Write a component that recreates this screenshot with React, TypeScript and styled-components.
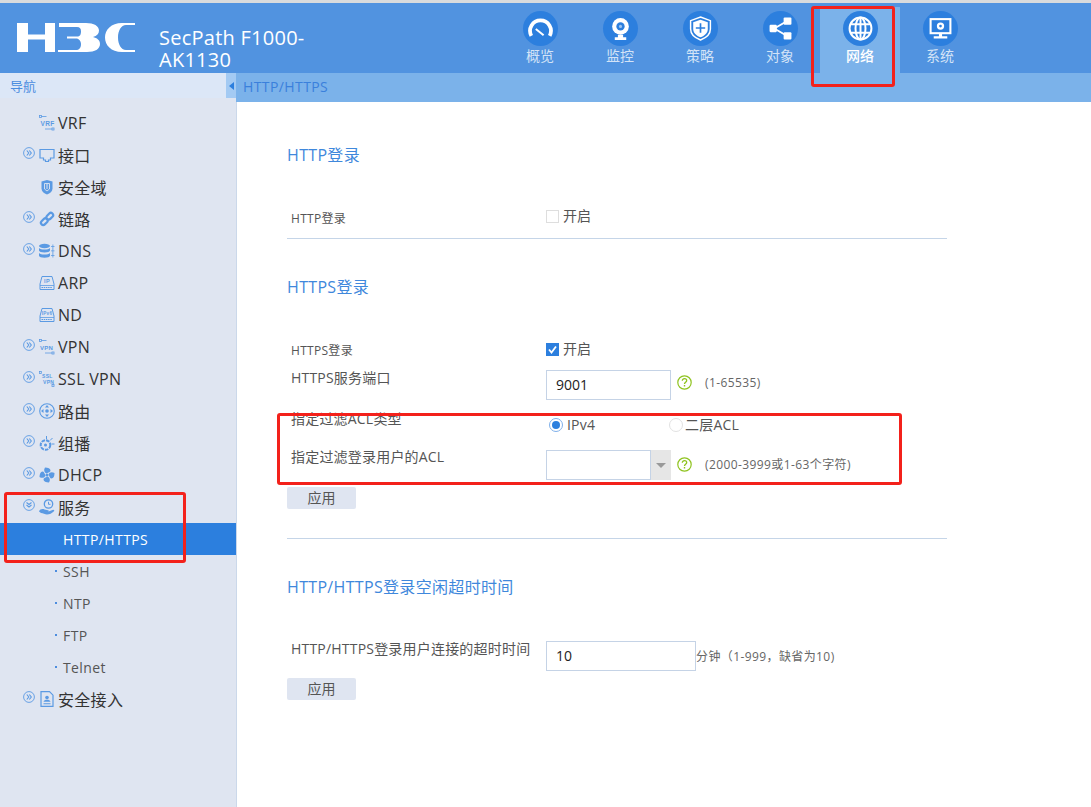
import React from "react";
import styled, { createGlobalStyle } from "styled-components";

const FONT = `"Open Sans", "Noto Sans CJK SC", sans-serif`;

const Global = createGlobalStyle`
  html, body { margin: 0; padding: 0; background: #fff; }
  * { box-sizing: border-box; }
  body { font-family: ${FONT}; }
`;

const Page = styled.div`
  position: relative;
  width: 1091px;
  height: 807px;
  overflow: hidden;
  border-top: 3px solid #d9dbdd;
  display: flex;
  flex-direction: column;
`;

const Header = styled.header`
  height: 70px;
  flex: none;
  background: #5193e0;
  display: flex;
`;

const Brand = styled.div`
  width: 500px;
  flex: none;
  display: flex;
  padding: 20px 0 0 17px;
`;

const LogoMark = styled.svg`
  width: 118px;
  height: 29px;
  flex: none;
  fill: #fff;
`;

const ProductName = styled.div`
  margin: 4px 0 0 24px;
  width: 170px;
  color: #fff;
  font-size: 20px;
  letter-spacing: 0.25px;
  line-height: 22px;
`;

const Tabs = styled.nav`
  display: flex;
`;

const Tab = styled.div<{ $active?: boolean }>`
  width: 80px;
  margin-top: 4px;
  padding-top: 4px;
  display: flex;
  flex-direction: column;
  align-items: center;
  background: ${(p) => (p.$active ? "#7bb2ea" : "transparent")};
  color: ${(p) => (p.$active ? "#fff" : "#d3e3f7")};
  font-size: 14px;
  line-height: 18px;
  font-weight: ${(p) => (p.$active ? 500 : 400)};
`;

const TabBadge = styled.div`
  width: 35px;
  height: 35px;
  border-radius: 50%;
  background: #2c7fde;
  display: flex;
  align-items: center;
  justify-content: center;
  margin-bottom: 1px;
  svg { width: 25px; height: 25px; display: block; }
`;

const Shell = styled.div`
  flex: 1;
  display: flex;
  min-height: 0;
`;

const Sidebar = styled.aside`
  width: 237px;
  flex: none;
  background: #dfe5f1;
  border-right: 1px solid #cbd8ea;
  display: flex;
  flex-direction: column;
`;

const SideHead = styled.div`
  height: 25px;
  flex: none;
  display: flex;
  background: #dce7f7;
`;

const SideTitle = styled.div`
  flex: 1;
  padding-left: 10px;
  font-size: 13px;
  line-height: 27px;
  color: #4c8ddf;
`;

const Collapse = styled.div`
  width: 10px;
  background: #a3caf3;
  display: flex;
  align-items: center;
  justify-content: center;
  &::before {
    content: "";
    border-style: solid;
    border-width: 4px 5px 4px 0;
    border-color: transparent #2c7fde transparent transparent;
  }
`;

const NavList = styled.div`
  padding-top: 9px;
`;

const NavRow = styled.div`
  height: 32px;
  display: flex;
  align-items: center;
  padding-left: 23px;
  color: #333;
  font-size: 16px;
  letter-spacing: 0.3px;
`;

const Expander = styled.svg<{ $hidden?: boolean }>`
  width: 12px;
  height: 12px;
  flex: none;
  margin: -4px 4px 0 0;
  visibility: ${(p) => (p.$hidden ? "hidden" : "visible")};
`;

const NavIcon = styled.svg`
  width: 16px;
  height: 16px;
  flex: none;
  margin: 0 3px 0 0;
`;

const SubRow = styled.div<{ $active?: boolean }>`
  height: 32px;
  display: flex;
  align-items: center;
  padding-left: ${(p) => (p.$active ? "63px" : "55px")};
  font-size: 14px;
  letter-spacing: 0.4px;
  font-weight: ${(p) => (p.$active ? 500 : 400)};
  color: ${(p) => (p.$active ? "#fff" : "#555")};
  background: ${(p) => (p.$active ? "#2c7fde" : "transparent")};
`;

const SubDot = styled.span`
  width: 2px;
  height: 2px;
  margin-right: 6px;
  background: #4c8ddf;
`;

const MainColumn = styled.main`
  flex: 1;
  min-width: 0;
  display: flex;
  flex-direction: column;
`;

const Crumb = styled.div`
  height: 29px;
  flex: none;
  margin-left: -1px;
  padding-left: 7px;
  background: #7bb2ea;
  color: #3a80dc;
  font-size: 14px;
  letter-spacing: 0.4px;
  line-height: 28px;
`;

const Content = styled.div`
  padding: 41px 0 0 50px;
  width: 710px;
`;

const Heading = styled.h2<{ $top?: number }>`
  margin: ${(p) => p.$top ?? 0}px 0 0;
  font-size: 16px;
  font-weight: 400;
  letter-spacing: 0.33px;
  line-height: 24px;
  color: #3f88dc;
`;

const Divider = styled.hr<{ $top: number }>`
  margin: ${(p) => p.$top}px 0 0;
  border: 0;
  height: 1px;
  width: 660px;
  background: #c5d5e8;
`;

const FormRow = styled.div<{ $top?: number; $height: number }>`
  margin-top: ${(p) => p.$top ?? 0}px;
  height: ${(p) => p.$height}px;
  display: grid;
  grid-template-columns: 259px 1fr;
  align-items: start;
`;

const Label = styled.div<{ $line: number; $small?: boolean }>`
  padding-left: 4px;
  font-size: ${(p) => (p.$small ? 12 : 14)}px;
  letter-spacing: ${(p) => (p.$small ? 0.3 : 0.2)}px;
  line-height: ${(p) => p.$line}px;
  color: #555;
  white-space: nowrap;
`;

const Control = styled.div<{ $pad?: number }>`
  padding-top: ${(p) => p.$pad ?? 0}px;
  display: flex;
  align-items: center;
`;

const CheckText = styled.label`
  display: flex;
  align-items: center;
  font-size: 14px;
  line-height: 22px;
  color: #555;
`;

const CheckBox = styled.span<{ $on?: boolean }>`
  width: 13px;
  height: 13px;
  margin-right: 4px;
  display: flex;
  align-items: center;
  justify-content: center;
  background: ${(p) => (p.$on ? "#2c7fde" : "#fff")};
  border: ${(p) => (p.$on ? "none" : "1px solid #dedede")};
  svg { width: 11px; height: 11px; }
`;

const TextInput = styled.input<{ $w: number }>`
  width: ${(p) => p.$w}px;
  height: 30px;
  border: 1px solid #c5d3e6;
  outline: none;
  padding: 0 0 2px 9px;
  font-family: ${FONT};
  font-size: 14px;
  color: #222;
  background: #fff;
`;

const SelectArrow = styled.div`
  width: 20px;
  height: 30px;
  background: #e6e6e6;
  display: flex;
  align-items: center;
  justify-content: center;
  &::before {
    content: "";
    border-style: solid;
    border-width: 5px 5px 0;
    border-color: #999 transparent transparent;
  }
`;

const Assist = styled.div<{ $lift?: number }>`
  display: flex;
  align-items: center;
  padding-bottom: ${(p) => p.$lift ?? 0}px;
`;

const HelpIcon = styled.svg`
  width: 15px;
  height: 15px;
  flex: none;
  margin: 0 13px 0 6px;
`;

const Hint = styled.span`
  font-size: 12px;
  letter-spacing: 0.4px;
  color: #666;
  white-space: nowrap;
`;

const RadioGroup = styled.div`
  display: flex;
  align-items: center;
  padding-left: 3px;
`;

const RadioItem = styled.label<{ $w: number }>`
  width: ${(p) => p.$w}px;
  display: flex;
  align-items: center;
  font-size: 14px;
  letter-spacing: 0.2px;
  line-height: 20px;
  color: #555;
`;

const Radio = styled.span<{ $on?: boolean }>`
  width: 14px;
  height: 14px;
  border-radius: 50%;
  margin-right: ${(p) => (p.$on ? 4 : 2)}px;
  border: 1px solid ${(p) => (p.$on ? "#7fb0ea" : "#e2e2e2")};
  display: flex;
  align-items: center;
  justify-content: center;
  &::before {
    content: "";
    width: 8px;
    height: 8px;
    border-radius: 50%;
    background: ${(p) => (p.$on ? "#2c7fde" : "transparent")};
  }
`;

const ApplyButton = styled.button<{ $top: number }>`
  display: block;
  margin-top: ${(p) => p.$top}px;
  width: 69px;
  height: 22px;
  border: 0;
  border-radius: 2px;
  padding: 0 0 2px;
  background: #dfe5f1;
  color: #555;
  font-family: ${FONT};
  font-size: 14px;
`;

const Callout = styled.div<{ $x: number; $y: number; $w: number; $h: number }>`
  position: absolute;
  left: ${(p) => p.$x}px;
  top: ${(p) => p.$y}px;
  width: ${(p) => p.$w}px;
  height: ${(p) => p.$h}px;
  border: 3px solid #f3211b;
  border-radius: 3px;
  pointer-events: none;
`;

const B = "#5b9ae3";

const tabIcons: Record<string, React.ReactNode> = {
  gauge: (
    <g fill="none" stroke="#fff">
      <path d="M3.2 19a10 10 0 1 1 17.600 0" strokeWidth="3.600" />
      <path d="M5.500 12.500l1 .6M8 8.500l.7.9M12 7v1.200M16 8.500l-.7.9M18.500 12.500l-1 .6" strokeWidth="1.100" stroke="#2c7fde" />
      <path d="M7.500 12.500l7.500 6" strokeWidth="2" />
    </g>
  ),
  cam: (
    <g>
      <circle cx="12" cy="10" r="8" fill="#fff" />
      <circle cx="12" cy="10" r="4" fill="#2c7fde" />
      <circle cx="12" cy="10" r="1.500" fill="#9cc4f1" />
      <path d="M9.500 18h5v2.500h3V23h-11v-2.500h3z" fill="#fff" />
    </g>
  ),
  shield: (
    <g fill="none" stroke="#fff">
      <path d="M12 1l9.500 3.500v8c0 5-4 8.500-9.500 10.500C6.500 21 2.500 17.500 2.500 12.500v-8z" strokeWidth="1.400" />
      <path d="M12 3.500l7 2.500v6.500c0 3.800-3 6.500-7 8-4-1.500-7-4.200-7-8V6z" fill="#fff" stroke="none" />
      <path d="M7.500 11.500h9M12 7v9" stroke="#2c7fde" strokeWidth="1.600" />
    </g>
  ),
  share: (
    <g fill="#fff">
      <path d="M6 12L18 5M6 12l12 7" stroke="#fff" strokeWidth="1.800" />
      <rect x="1.500" y="8.500" width="7" height="7" rx="1" />
      <rect x="15" y="1.500" width="7.500" height="7" rx="1" />
      <rect x="15" y="15.500" width="7.500" height="7" rx="1" />
    </g>
  ),
  globe: (
    <g fill="none" stroke="#fff" strokeWidth="1.900">
      <circle cx="12" cy="12" r="10.500" />
      <ellipse cx="12" cy="12" rx="4.800" ry="10.500" />
      <path d="M12 1.500v21M2.500 8h19M2.500 16h19" />
    </g>
  ),
  monitor: (
    <g>
      <rect x="1.500" y="2" width="21" height="15.500" fill="#fff" />
      <rect x="3.500" y="4" width="17" height="11.500" fill="#2c7fde" />
      <circle cx="12" cy="9.700" r="3.500" fill="#fff" />
      <circle cx="12" cy="9.700" r="1.300" fill="#2c7fde" />
      <path d="M10.500 17h3v2.500h5V21.500h-13v-2h5z" fill="#fff" />
    </g>
  ),
};

const navIcons: Record<string, React.ReactNode> = {
  vrf: (
    <g fill="none" stroke={B} strokeWidth="0.800">
      <rect x="0.500" y="0.500" width="2" height="2" />
      <rect x="13" y="13" width="2" height="2" />
      <path d="M2.500 1.500h5M13 14H6" />
      <text x="1.500" y="10.500" fontSize="6.500" fontWeight="700" fill={B} stroke="none" fontFamily="Liberation Sans">VRF</text>
    </g>
  ),
  port: <path d="M1 2.500h14v8.500h-3.500v2h-2v1.500h-3V13h-2v-2H1z" fill="none" stroke={B} strokeWidth="1.200" />,
  zone: (
    <g>
      <path d="M8 1l5.500 1.500v7c0 3-2.500 5-5.500 6-3-1-5.500-3-5.500-6v-7z" fill={B} />
      <path d="M5.500 4.500h5v5.500l-2.500 2-2.500-2z" fill="none" stroke="#dfe5f1" strokeWidth="0.900" />
      <path d="M8 5v5" stroke="#dfe5f1" strokeWidth="1" />
    </g>
  ),
  link: (
    <g fill="none" stroke={B} strokeWidth="2.200">
      <rect x="1.500" y="8.500" width="7.500" height="4.500" rx="2.200" transform="rotate(-45 5.200 10.700)" />
      <rect x="7" y="3" width="7.500" height="4.500" rx="2.200" transform="rotate(-45 10.700 5.200)" />
    </g>
  ),
  dns: (
    <g fill={B}>
      <ellipse cx="5.500" cy="3" rx="5.500" ry="2.200" />
      <path d="M0 5v2.500c0 1.200 2.500 2 5.500 2s5.500-.8 5.500-2V5c-1 1-3 1.500-5.500 1.500S1 6 0 5z" />
      <path d="M0 10v2.800c0 1.200 2.500 2 5.500 2s5.500-.8 5.500-2V10c-1 1-3 1.500-5.500 1.500S1 11 0 10z" />
      <path d="M13.500 1.500h.8v13h-.8zM12 3h3.500v.8H12zM12 7.500h3.500v.8H12zM12 12h3.500v.8H12z" />
    </g>
  ),
  ip: (
    <g fill="none" stroke={B}>
      <path d="M3 1.500h10l2 7.500v5.500H1V9z" strokeWidth="1" />
      <path d="M1 10.500h14" strokeWidth="0.800" />
      <path d="M2.500 12.500h11" strokeWidth="1.200" strokeDasharray="1.500 0.700" />
      <text x="8" y="8" fontSize="5.500" fontWeight="700" textAnchor="middle" fill={B} stroke="none" fontFamily="Liberation Sans">IP</text>
    </g>
  ),
  ipv6: (
    <g fill="none" stroke={B}>
      <path d="M3 1.500h10l2 7.500v5.500H1V9z" strokeWidth="1" />
      <path d="M1 10.500h14" strokeWidth="0.800" />
      <path d="M2.500 12.500h11" strokeWidth="1.200" strokeDasharray="1.500 0.700" />
      <text x="8" y="7.500" fontSize="4.500" fontWeight="700" textAnchor="middle" fill={B} stroke="none" fontFamily="Liberation Sans">IPv6</text>
    </g>
  ),
  vpn: (
    <g fill="none" stroke={B} strokeWidth="0.800">
      <rect x="0.500" y="0.500" width="2" height="2" />
      <rect x="13" y="13" width="2" height="2" />
      <path d="M2.500 1.500h5M13 14H6" />
      <text x="1" y="10.500" fontSize="6" fontWeight="700" fill={B} stroke="none" fontFamily="Liberation Sans">VPN</text>
    </g>
  ),
  ssl: (
    <g fill="none" stroke={B} strokeWidth="0.800">
      <rect x="0.300" y="0.500" width="2" height="2" />
      <rect x="13" y="13.500" width="2" height="2" />
      <text x="3" y="7" fontSize="5" fontWeight="700" fill={B} stroke="none" fontFamily="Liberation Sans">SSL</text>
      <text x="4" y="13" fontSize="5" fontWeight="700" fill={B} stroke="none" fontFamily="Liberation Sans">VPN</text>
    </g>
  ),
  route: (
    <g>
      <circle cx="8" cy="8" r="7.300" fill="none" stroke={B} strokeWidth="1.100" />
      <circle cx="8" cy="8" r="1.800" fill={B} />
      <path d="M8 2l2 2.500H6zM8 14l2-2.500H6zM2 8l2.500-2v4zM14 8l-2.500-2v4z" fill={B} />
    </g>
  ),
  multicast: (
    <g fill="none" stroke={B}>
      <circle cx="6.500" cy="10" r="4.800" strokeWidth="2" strokeDasharray="3.500 1" />
      <circle cx="6.500" cy="10" r="1.500" fill={B} strokeWidth="0" />
      <path d="M7.500 4V1M11 5.500l2.500-2.500M12.500 9h3" strokeWidth="1" />
    </g>
  ),
  fan: (
    <g fill={B}>
      <circle cx="8" cy="8" r="1.500" />
      <path d="M7.500 6.500C5 5.500 4.500 3 6 .5c3 0 5.500 1 5.500 3 0 1.500-2 2-4 3z" />
      <path d="M9.500 7.500c1-2.500 3.500-3 6-1.500 0 3-1 5.500-3 5.500-1.500 0-2-2-3-4z" />
      <path d="M8.500 9.500c2.500 1 3 3.500 1.500 6-3 0-5.500-1-5.500-3 0-1.500 2-2 4-3z" />
      <path d="M6.500 8.500c-1 2.500-3.500 3-6 1.500 0-3 1-5.500 3-5.500 1.500 0 2 2 3 4z" />
    </g>
  ),
  service: (
    <g>
      <circle cx="9.500" cy="5" r="4.200" fill="none" stroke={B} strokeWidth="1.300" />
      <path d="M9.500 2.800V5.300h2" fill="none" stroke={B} strokeWidth="1" />
      <path d="M0 12.500c1-2.500 3.500-3 5.500-2l3.500 .8c1 .3 1 1.200 0 1.200H6.500h3l4-1.500c1.500-.5 2.200.5 1.500 1.200-2 2-4.500 3.300-7 3.300-2 0-4-1.500-6-1.500z" fill={B} />
    </g>
  ),
  doc: (
    <g>
      <path d="M2 .7h8.500L14 4.200V15.300H2z" fill="none" stroke={B} strokeWidth="1.200" />
      <circle cx="8" cy="6.500" r="1.800" fill={B} />
      <path d="M4.500 10.800c.5-1.500 2-2 3.500-2s3 .5 3.500 2zM4.500 12.300h7v1h-7z" fill={B} />
    </g>
  ),
};

type NavItem = { label: string; icon: string; expand?: "right" | "down" };

const Chevrons: React.FC<{ dir?: "right" | "down"; hidden?: boolean }> = ({ dir, hidden }) => (
  <Expander viewBox="0 0 12 12" $hidden={hidden}>
    <circle cx="6" cy="6" r="5.400" fill="none" stroke={B} strokeWidth="0.900" />
    <path
      d={dir === "down" ? "M3.500 3.500L6 5.500l2.500-2M3.500 6L6 8l2.500-2" : "M3.800 3.500L5.800 6l-2 2.500M6.300 3.500L8.300 6l-2 2.500"}
      fill="none"
      stroke={B}
      strokeWidth="1.100"
    />
  </Expander>
);

const Row: React.FC<NavItem> = ({ label, icon, expand }) => (
  <NavRow>
    <Chevrons dir={expand} hidden={!expand} />
    <NavIcon viewBox="0 0 16 16">{navIcons[icon]}</NavIcon>
    {label}
  </NavRow>
);

const topItems: NavItem[] = [
  { label: "VRF", icon: "vrf" },
  { label: "接口", icon: "port", expand: "right" },
  { label: "安全域", icon: "zone" },
  { label: "链路", icon: "link", expand: "right" },
  { label: "DNS", icon: "dns", expand: "right" },
  { label: "ARP", icon: "ip" },
  { label: "ND", icon: "ipv6" },
  { label: "VPN", icon: "vpn", expand: "right" },
  { label: "SSL VPN", icon: "ssl", expand: "right" },
  { label: "路由", icon: "route", expand: "right" },
  { label: "组播", icon: "multicast", expand: "right" },
  { label: "DHCP", icon: "fan", expand: "right" },
  { label: "服务", icon: "service", expand: "down" },
];

const tabs = [
  { label: "概览", icon: "gauge" },
  { label: "监控", icon: "cam" },
  { label: "策略", icon: "shield" },
  { label: "对象", icon: "share" },
  { label: "网络", icon: "globe", active: true },
  { label: "系统", icon: "monitor" },
];

const Help = () => (
  <HelpIcon viewBox="0 0 15 15">
    <circle cx="7.500" cy="7.500" r="6.700" fill="none" stroke="#8fc31f" strokeWidth="1.200" />
    <path d="M5.300 5.800c0-1.400 1-2.200 2.200-2.200s2.200.8 2.200 2c0 1.700-2.200 1.700-2.200 3.400" fill="none" stroke="#8fc31f" strokeWidth="1.300" />
    <rect x="6.800" y="10" width="1.400" height="1.500" fill="#8fc31f" />
  </HelpIcon>
);

export default function App() {
  return (
    <>
      <Global />
      <Page>
        <Header>
          <Brand>
            <LogoMark viewBox="0 0 118 29" aria-label="H3C">
              <path d="M0 0h11v11.500h17V0h10v29H28V16.500H11V29H0z" />
              <path d="M42 0h27c8 0 13 3 13 7.500 0 3-2 5.500-6 6.500 4 1 7 3 7 7 0 5-5 8-13 8H41v-2h18c3 0 5-2 5-6 0-3-2-5.500-5-5.500H50v-2h10c3 0 4-2 4-5 0-3-1-4.500-4-4.500H42z" />
              <path d="M118 0h-13C94 0 88 7 88 14.500S94 29 105 29h13v-2h-9c-5 0-8-6-8-12.500S104 2 109 2h9z" />
            </LogoMark>
            <ProductName>SecPath F1000-AK1130</ProductName>
          </Brand>
          <Tabs>
            {tabs.map((t) => (
              <Tab key={t.label} $active={t.active}>
                <TabBadge>
                  <svg viewBox="0 0 24 24">{tabIcons[t.icon]}</svg>
                </TabBadge>
                {t.label}
              </Tab>
            ))}
          </Tabs>
        </Header>
        <Shell>
          <Sidebar>
            <SideHead>
              <SideTitle>导航</SideTitle>
              <Collapse />
            </SideHead>
            <NavList>
              {topItems.map((i) => (
                <Row key={i.label} {...i} />
              ))}
              <SubRow $active>HTTP/HTTPS</SubRow>
              {["SSH", "NTP", "FTP", "Telnet"].map((s) => (
                <SubRow key={s}>
                  <SubDot />
                  {s}
                </SubRow>
              ))}
              <Row label="安全接入" icon="doc" expand="right" />
            </NavList>
          </Sidebar>
          <MainColumn>
            <Crumb>HTTP/HTTPS</Crumb>
            <Content>
              <Heading>HTTP登录</Heading>
              <FormRow $top={38} $height={24}>
                <Label $small $line={27}>HTTP登录</Label>
                <Control>
                  <CheckText>
                    <CheckBox />
                    开启
                  </CheckText>
                </Control>
              </FormRow>
              <Divider $top={9} />
              <Heading $top={36}>HTTPS登录</Heading>
              <FormRow $top={39} $height={24}>
                <Label $small $line={26}>HTTPS登录</Label>
                <Control>
                  <CheckText>
                    <CheckBox $on>
                      <svg viewBox="0 0 11 11">
                        <path d="M2 5.500l2.500 3L9 2.500" fill="none" stroke="#fff" strokeWidth="1.800" />
                      </svg>
                    </CheckBox>
                    开启
                  </CheckText>
                </Control>
              </FormRow>
              <FormRow $height={42}>
                <Label $line={32}>HTTPS服务端口</Label>
                <Control $pad={8}>
                  <TextInput $w={125} defaultValue="9001" />
                  <Assist $lift={5}>
                    <Help />
                    <Hint>(1-65535)</Hint>
                  </Assist>
                </Control>
              </FormRow>
              <FormRow $height={36}>
                <Label $line={29}>指定过滤ACL类型</Label>
                <Control $pad={11}>
                  <RadioGroup>
                    <RadioItem $w={120}>
                      <Radio $on />
                      IPv4
                    </RadioItem>
                    <RadioItem $w={90}>
                      <Radio />
                      二层ACL
                    </RadioItem>
                  </RadioGroup>
                </Control>
              </FormRow>
              <FormRow $height={40}>
                <Label $line={34}>指定过滤登录用户的ACL</Label>
                <Control $pad={10}>
                  <TextInput $w={105} />
                  <SelectArrow />
                  <Assist $lift={2}>
                    <Help />
                    <Hint>(2000-3999或1-63个字符)</Hint>
                  </Assist>
                </Control>
              </FormRow>
              <ApplyButton $top={7}>应用</ApplyButton>
              <Divider $top={29} />
              <Heading $top={36}>HTTP/HTTPS登录空闲超时时间</Heading>
              <FormRow $top={40} $height={32}>
                <Label $line={20}>HTTP/HTTPS登录用户连接的超时时间</Label>
                <Control $pad={2}>
                  <TextInput $w={150} defaultValue="10" />
                  <Hint>分钟（1-999，缺省为10)</Hint>
                </Control>
              </FormRow>
              <ApplyButton $top={7}>应用</ApplyButton>
            </Content>
          </MainColumn>
        </Shell>
        <Callout $x={811} $y={3} $w={84} $h={81} />
        <Callout $x={277} $y={410} $w={625} $h={72} />
        <Callout $x={4} $y={489} $w={182} $h={71} />
      </Page>
    </>
  );
}
